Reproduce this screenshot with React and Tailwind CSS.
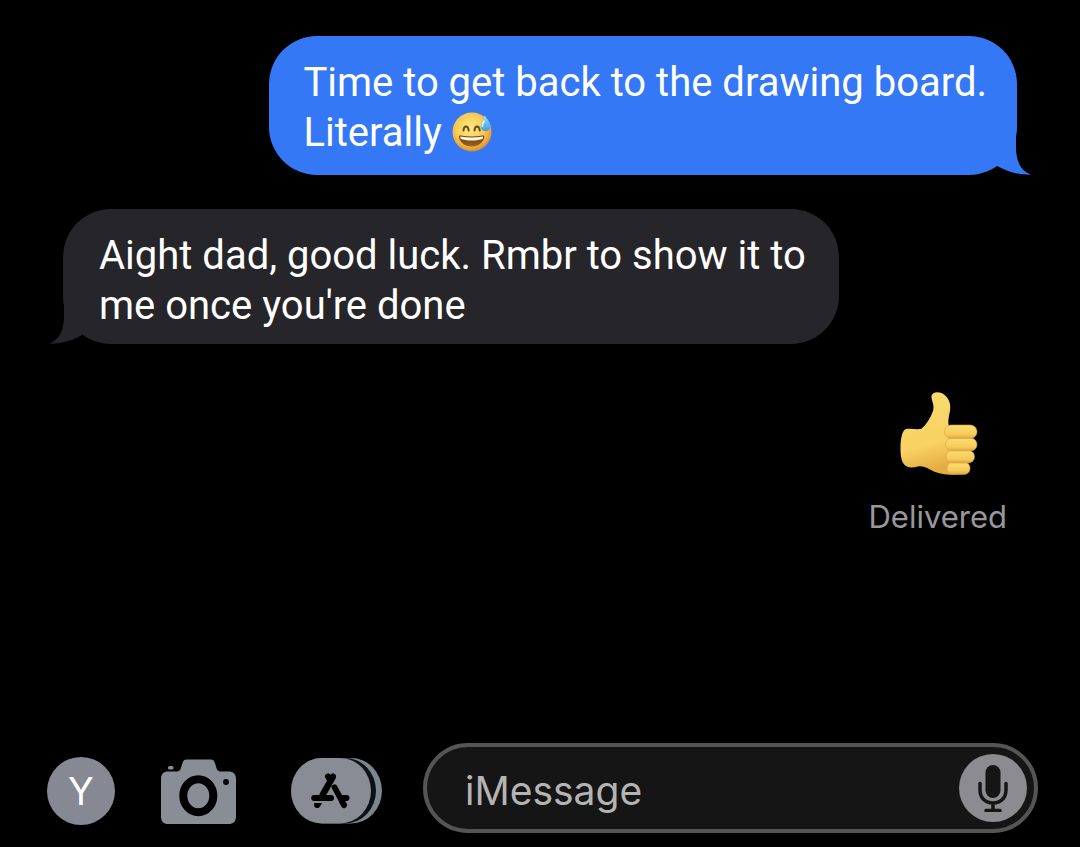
function SweatSmile({ className }) {
  return (
    <svg className={className} viewBox="0 0 40 40" role="img" aria-label="Grinning face with sweat">
      <defs>
        <radialGradient id="face" cx="0.45" cy="0.4" r="0.62">
          <stop offset="0" stopColor="#ffe98a" />
          <stop offset="0.6" stopColor="#f9cb50" />
          <stop offset="0.88" stopColor="#e4a13a" />
          <stop offset="1" stopColor="#c98432" />
        </radialGradient>
        <linearGradient id="mouth" x1="0" y1="0" x2="0" y2="1">
          <stop offset="0" stopColor="#6b3d10" />
          <stop offset="1" stopColor="#9a6420" />
        </linearGradient>
        <linearGradient id="drop" x1="0" y1="0" x2="0" y2="1">
          <stop offset="0" stopColor="#a5dcf5" />
          <stop offset="1" stopColor="#3d9fe0" />
        </linearGradient>
      </defs>
      <circle cx="20" cy="20" r="19.5" fill="url(#face)" />
      <path d="M11.5 18.5c.4-5.500 4.600-5.500 5.200 0M22.500 18.500c.4-5.500 4.600-5.500 5.200 0" fill="none" stroke="#6b4a12" strokeWidth="2" strokeLinecap="round" />
      <path d="M7 24.500c0-1 .7-1.200 1.700-1 7 1.200 15 1.200 22 0 1-.2 1.700.1 1.600 1-.7 6-5.900 10-12.600 10S7.500 30.500 7 24.500z" fill="url(#mouth)" />
      <path d="M8.300 24.500c7.500 1.300 15 1.300 22.700 0 .2 1.300-.2 2.300-1.300 2.700-6 1.700-14 1.700-20 0-1.100-.4-1.600-1.400-1.400-2.700z" fill="#fff8e6" />
      <path d="M32.500 3c2.500 4 6 7.500 6 11 0 3.200-2.200 5-5 5s-5-1.800-4.800-4.800C29 11 32 8 32.500 3z" fill="url(#drop)" />
      <path d="M32 9c-1.500 2.300-2 4-1.500 5.500" fill="none" stroke="#e0f5ff" strokeWidth="1.500" strokeLinecap="round" />
    </svg>
  );
}

function ThumbsUp({ className }) {
  return (
    <svg className={className} viewBox="899 391 80 85" role="img" aria-label="Thumbs up">
      <defs>
        <linearGradient id="hand" x1="0" y1="0" x2="0.2" y2="1">
          <stop offset="0" stopColor="#fadb70" />
          <stop offset="0.7" stopColor="#f8d262" />
          <stop offset="1" stopColor="#e3ad44" />
        </linearGradient>
        <linearGradient id="finger" x1="0" y1="0" x2="0" y2="1">
          <stop offset="0" stopColor="#fbdc74" />
          <stop offset="0.7" stopColor="#f6cb58" />
          <stop offset="1" stopColor="#dca440" />
        </linearGradient>
      </defs>
      <path
        d="M906 429c5-.5 10 .5 15 0 5-4 9-10 12-18 2-6-2-11-1.500-15 .8-4.500 8-5 12.500-1.500 5 4 7 9 6 16-1 6-2.500 11-1 16l9 2 5 20-3 25c-10 2.500-22 1-30-4-5-3-9-3.500-12-3-4 1-8 1.500-11 0-5-2-6.500-9-6.500-18 0-9 1.500-18.500 5.500-19.500z"
        fill="url(#hand)"
      />
      <g fill="url(#finger)" stroke="#d9a547" strokeWidth="0.6">
        <rect x="947" y="462" width="23" height="12.500" rx="6" />
        <rect x="946" y="450.500" width="28.500" height="12.500" rx="6.200" />
        <rect x="945.500" y="438" width="31.500" height="13" rx="6.500" />
        <rect x="944.500" y="425" width="32.500" height="13.500" rx="6.700" />
      </g>
    </svg>
  );
}

function SentTail() {
  return (
    <svg className="absolute -right-4 bottom-0 h-12 w-12" viewBox="985 127 48 48" aria-hidden="true">
      <path d="M1016 127V147C1016 160 1020 171 1031 174.500C1019 175 1008 172 997 166L985 150V127Z" fill="#3478f6" />
    </svg>
  );
}

function ReceivedTail() {
  return (
    <svg className="absolute -left-4 bottom-0 h-12 w-12" viewBox="47 296 48 48" aria-hidden="true">
      <path d="M64 296V316C64 329 60 340 49 343.500C61 344 72 341 82 335L95 319V296Z" fill="#262529" />
    </svg>
  );
}

function CameraIcon() {
  return (
    <svg className="h-[66px] w-[76px]" viewBox="161 758 76 66" aria-hidden="true">
      <path
        d="M168 771.500h8c3.500 0 4.500-1.500 5.200-4.500l1.300-4c.7-2.500 1.800-3.500 4.200-3.500h24c2.400 0 3.500 1 4.200 3.500l1.300 4c.7 3 1.700 4.500 5.200 4.500h7c5 0 7.600 2.500 7.600 7.500v37.500c0 5-2.600 7.500-7.600 7.500H168.500c-5 0-7.500-2.500-7.500-7.500V779c0-5 2.500-7.500 7-7.500z"
        fill="#888d96"
      />
      <rect x="168" y="766" width="5.500" height="3.500" rx="1.500" fill="#888d96" />
      <ellipse cx="198.300" cy="795.700" rx="15" ry="16.500" fill="none" stroke="#000" strokeWidth="8" />
      <circle cx="226" cy="782" r="2.900" fill="#000" />
    </svg>
  );
}

function AppsIcon() {
  return (
    <svg className="h-[66px] w-[92px]" viewBox="291 758 92 66" aria-hidden="true">
      <rect x="291" y="758" width="91" height="65.500" rx="31" ry="32.700" fill="#7b868d" />
      <rect x="291" y="758" width="85" height="65.500" rx="31" ry="32.700" fill="#0b1115" />
      <rect x="291" y="758" width="80" height="65.500" rx="31" ry="32.700" fill="#8a8c95" />
      <g fill="none" stroke="#000" strokeWidth="6" strokeLinecap="round">
        <path d="M328 776.500l2 3.500" />
        <path d="M333 776.500L322 796" strokeLinecap="butt" strokeWidth="6.500" />
        <path d="M333 776.500l-2 3.500" />
        <path d="M314.200 798H331" />
        <path d="M341 798h5.500" />
        <path d="M334.500 787.500l9.500 17.500" />
      </g>
      <path d="M330.800 788l7.500 14" fill="none" stroke="#8a8c95" strokeWidth="1.500" />
      <path d="M314.500 803h7.500l-2 3.500c-1.500 2.300-4.500 2-5.500 0-.6-1.300-.5-2.500 0-3.500z" fill="#000" />
    </svg>
  );
}

function MicIcon() {
  return (
    <svg className="h-12 w-8" viewBox="977 763 32 48" aria-hidden="true">
      <rect x="985.500" y="764" width="15" height="33" rx="7.500" fill="#151515" />
      <path d="M980 782.500v6.500c0 8 5.500 13 13 13s13-5 13-13v-6.500M993 802v7M986 809.500h14" fill="none" stroke="#151515" strokeWidth="3.500" strokeLinecap="round" />
    </svg>
  );
}

export default function App() {
  return (
    <div className="flex min-h-screen flex-col bg-black font-['Inter','Liberation_Sans',sans-serif] text-white">
      <main className="flex flex-1 flex-col pt-9 pr-[63px] pl-[63px]">
        <div className="relative max-w-[85%] self-end rounded-[48px] bg-[#3478f6] pt-[22px] pr-[30px] pb-[17px] pl-[34px] font-['Roboto','Liberation_Sans',sans-serif] text-[40px] leading-[50px]">
          <SentTail />
          <p className="relative">
            Time to get back to the drawing board.
            <br />
            Literally <SweatSmile className="inline-block size-10 align-[-6px]" />
          </p>
        </div>

        <div className="relative mt-[34px] max-w-[85%] self-start rounded-[48px] bg-[#262529] pt-[22px] pr-[33px] pb-[13px] pl-9 font-['Roboto','Liberation_Sans',sans-serif] text-[40px] leading-[50px]">
          <ReceivedTail />
          <p className="relative">
            Aight dad, good luck. Rmbr to show it to
            <br />
            me once you're done
          </p>
        </div>

        <div className="mt-[47px] mr-[10px] flex flex-col items-end self-end">
          <ThumbsUp className="mr-7 h-[85px] w-20" />
          <p className="mt-[21px] text-[31px] leading-10 text-[#98989c]">Delivered</p>
        </div>
      </main>

      <form className="flex items-center pr-[42px] pb-[14px] pl-[47px]" onSubmit={(e) => e.preventDefault()}>
        <div className="flex shrink-0 items-center pt-[6px]">
          <button type="button" aria-label="Profile" className="flex size-[68px] items-center justify-center rounded-full bg-[#868993] text-[38px]">
            Y
          </button>
          <button type="button" aria-label="Camera" className="ml-[46px]">
            <CameraIcon />
          </button>
          <button type="button" aria-label="Apps" className="ml-[54px]">
            <AppsIcon />
          </button>
        </div>
        <div className="ml-10 flex h-[90px] min-w-0 flex-1 items-center rounded-full border-4 border-[#555555] bg-[#151515] pr-[7px] pl-[38px]">
          <input type="text" aria-label="iMessage" placeholder="iMessage" className="min-w-0 flex-1 bg-transparent pt-[6px] text-[39px] outline-none placeholder:text-[#b4b4b4]" />
          <button type="button" aria-label="Record audio" className="flex size-[68px] shrink-0 items-center justify-center rounded-full bg-[#8b8b90]">
            <MicIcon />
          </button>
        </div>
      </form>
    </div>
  );
}
